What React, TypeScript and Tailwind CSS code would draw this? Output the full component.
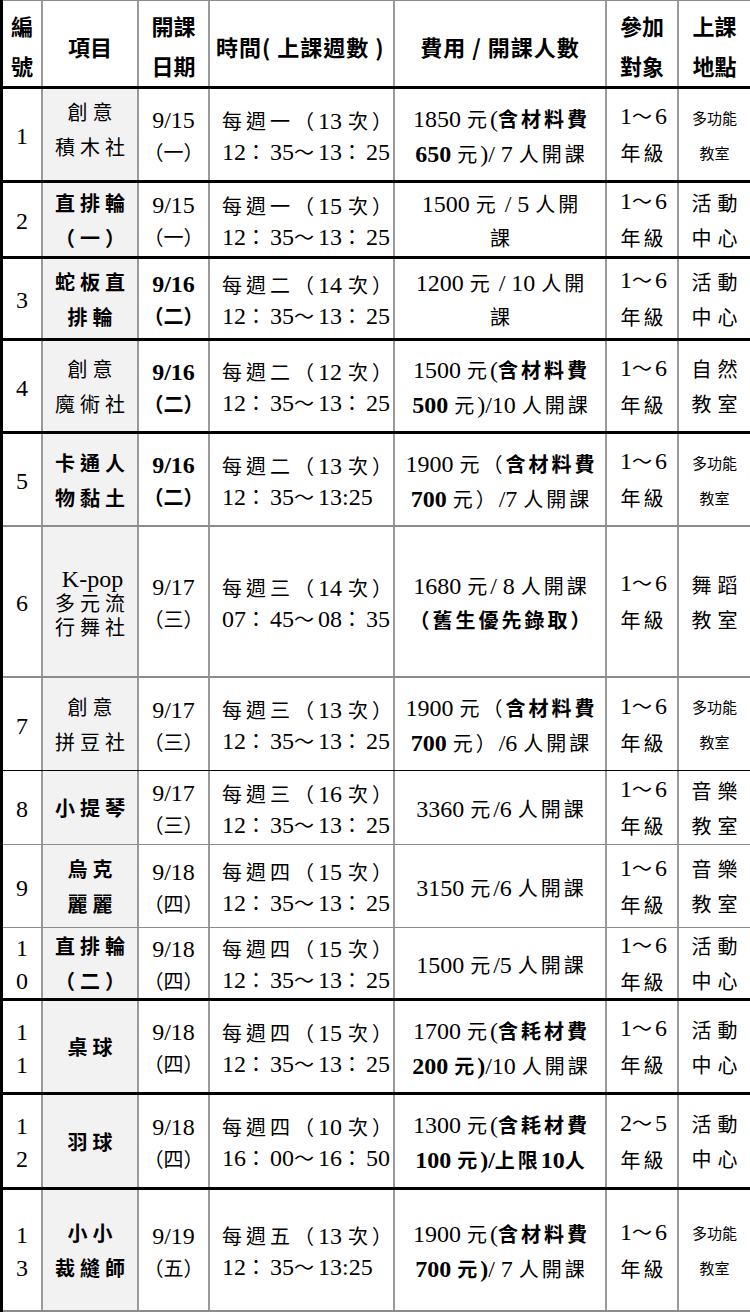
import type { ReactNode } from "react";

// 社團課程一覽表：編號 / 項目 / 日期 / 時間 / 費用 / 對象 / 地點

type Row = {
  no: string[];
  item: string[];
  date: string[];
  time: string[];
  fee: string[];
  grade: string[];
  place: string[];
  itemBold?: boolean;
  dateBold?: boolean;
  smallPlace?: boolean;
  rowCls: string; // 列高 + 下框線
  itemCls?: string;
};

const GRID = "grid grid-rows-1 grid-cols-[40px_96px_71px_185px_212px_72px_1fr]";
const CELL = "flex flex-col justify-center border-r-2 border-r-[#9a9a9a] whitespace-nowrap";
const LATIN = "font-['Liberation_Serif',serif] text-[24px] tracking-normal";

const BLACK3 = "border-b-[3px] border-b-black";
const GRAY2 = "border-b-2 border-b-[#8c8c8c]";
const BLACK1 = "border-b border-b-black";
const GRAY1 = "border-b border-b-[#8c8c8c]";

const ROWS: Row[] = [
  {
    no: ["1"], item: ["創意", "積木社"], itemCls: "pb-[12px]", date: ["9/15", "（一）"],
    time: ["每週一（13 次）", "12：35～13：25"],
    fee: ["1850 元(**含材料費**", "**650** 元)/ 7 人開課"],
    grade: ["1～6", "年級"], place: ["多功能", "教室"], smallPlace: true,
    rowCls: `h-[94px] ${BLACK3}`,
  },
  {
    no: ["2"], item: ["直排輪", "（一）"], itemBold: true, date: ["9/15", "（一）"],
    time: ["每週一（15 次）", "12：35～13：25"],
    fee: ["1500 元 / 5 人開", "課"],
    grade: ["1～6", "年級"], place: ["活動", "中心"],
    rowCls: `h-[76px] ${BLACK3}`,
  },
  {
    no: ["3"], item: ["蛇板直", "排輪"], itemBold: true, date: ["9/16", "（二）"], dateBold: true,
    time: ["每週二（14 次）", "12：35～13：25"],
    fee: ["1200 元 / 10 人開", "課"],
    grade: ["1～6", "年級"], place: ["活動", "中心"],
    rowCls: `h-[82px] ${BLACK3}`,
  },
  {
    no: ["4"], item: ["創意", "魔術社"], date: ["9/16", "（二）"], dateBold: true,
    time: ["每週二（12 次）", "12：35～13：25"],
    fee: ["1500 元(**含材料費**", "**500** 元)/10 人開課"],
    grade: ["1～6", "年級"], place: ["自然", "教室"],
    rowCls: `h-[93px] ${BLACK3}`,
  },
  {
    no: ["5"], item: ["卡通人", "物黏土"], itemBold: true, date: ["9/16", "（二）"], dateBold: true,
    time: ["每週二（13 次）", "12：35～13:25"],
    fee: ["1900 元（**含材料費**", "**700** 元）/7 人開課"],
    grade: ["1～6", "年級"], place: ["多功能", "教室"], smallPlace: true,
    rowCls: `h-[93px] ${GRAY2}`,
  },
  {
    no: ["6"], item: ["K-pop", "多元流", "行舞社"], itemCls: "!leading-[24px]", date: ["9/17", "（三）"],
    time: ["每週三（14 次）", "07：45～08：35"],
    fee: ["1680 元/ 8 人開課", "**（舊生優先錄取）**"],
    grade: ["1～6", "年級"], place: ["舞蹈", "教室"],
    rowCls: `h-[151px] ${GRAY2}`,
  },
  {
    no: ["7"], item: ["創意", "拼豆社"], date: ["9/17", "（三）"],
    time: ["每週三（13 次）", "12：35～13：25"],
    fee: ["1900 元（**含材料費**", "**700** 元）/6 人開課"],
    grade: ["1～6", "年級"], place: ["多功能", "教室"], smallPlace: true,
    rowCls: `h-[93px] ${BLACK1}`,
  },
  {
    no: ["8"], item: ["小提琴"], itemBold: true, date: ["9/17", "（三）"],
    time: ["每週三（16 次）", "12：35～13：25"],
    fee: ["3360 元/6 人開課"],
    grade: ["1～6", "年級"], place: ["音樂", "教室"],
    rowCls: `h-[74px] ${GRAY1}`,
  },
  {
    no: ["9"], item: ["烏克", "麗麗"], itemBold: true, date: ["9/18", "（四）"],
    time: ["每週四（15 次）", "12：35～13：25"],
    fee: ["3150 元/6 人開課"],
    grade: ["1～6", "年級"], place: ["音樂", "教室"],
    rowCls: `h-[83px] ${GRAY1}`,
  },
  {
    no: ["1", "0"], item: ["直排輪", "（二）"], itemBold: true, date: ["9/18", "（四）"],
    time: ["每週四（15 次）", "12：35～13：25"],
    fee: ["1500 元/5 人開課"],
    grade: ["1～6", "年級"], place: ["活動", "中心"],
    rowCls: `h-[73px] ${BLACK3}`,
  },
  {
    no: ["1", "1"], item: ["桌球"], itemBold: true, date: ["9/18", "（四）"],
    time: ["每週四（15 次）", "12：35～13：25"],
    fee: ["1700 元(**含耗材費**", "**200 元)**/10 人開課"],
    grade: ["1～6", "年級"], place: ["活動", "中心"],
    rowCls: `h-[94px] ${BLACK3}`,
  },
  {
    no: ["1", "2"], item: ["羽球"], itemBold: true, date: ["9/18", "（四）"],
    time: ["每週四（10 次）", "16：00～16：50"],
    fee: ["1300 元(**含耗材費**", "**100 元)/上限10人**"],
    grade: ["2～5", "年級"], place: ["活動", "中心"],
    rowCls: `h-[95px] ${BLACK3}`,
  },
  {
    no: ["1", "3"], item: ["小小", "裁縫師"], itemBold: true, date: ["9/19", "（五）"],
    time: ["每週五（13 次）", "12：35～13:25"],
    fee: ["1900 元(**含材料費**", "**700 元)**/ 7 人開課"],
    grade: ["1～6", "年級"], place: ["多功能", "教室"], smallPlace: true,
    rowCls: `h-[122px] ${GRAY2}`,
  },
];

// 英數字用襯線字 24px，中文用 20px；**...** 為粗體
function Rich({ text }: { text: string }) {
  const parts = text.split("**");
  return (
    <>
      {parts.map((part, i) => {
        const pieces = part.split(/([\x20-\x7e]+)/).filter(Boolean);
        const nodes: ReactNode[] = pieces.map((p, j) =>
          /^[\x20-\x7e]+$/.test(p) ? (
            <span key={j} className={LATIN}>
              {p}
            </span>
          ) : (
            <span key={j}>{p}</span>
          )
        );
        return (
          <span key={i} className={i % 2 ? "font-bold" : undefined}>
            {nodes}
          </span>
        );
      })}
    </>
  );
}

function Lines({ lines }: { lines: string[] }) {
  return (
    <>
      {lines.map((l, i) => (
        <div key={i}>
          <Rich text={l} />
        </div>
      ))}
    </>
  );
}

function Header() {
  return (
    <div
      className={`${GRID} h-[89px] border-t border-t-[#8c8c8c] ${BLACK3} font-['Noto_Sans_CJK_TC',sans-serif] text-[22px] font-bold leading-[40px]`}
    >
      <div className={`${CELL} items-center pt-[2px]`}>
        <div>編</div>
        <div>號</div>
      </div>
      <div className={`${CELL} items-center pt-[4px]`}>項目</div>
      <div className={`${CELL} items-center pt-[2px]`}>
        <div>開課</div>
        <div>日期</div>
      </div>
      <div className={`${CELL} pl-[6px] pt-[4px] tracking-[1px]`}>時間( 上課週數 )</div>
      <div className={`${CELL} items-center pt-[4px] tracking-[1px]`}>費用 / 開課人數</div>
      <div className={`${CELL} items-center pt-[2px]`}>
        <div>參加</div>
        <div>對象</div>
      </div>
      <div className="flex flex-col items-center justify-center pt-[2px]">
        <div>上課</div>
        <div>地點</div>
      </div>
    </div>
  );
}

function CourseRow({ r }: { r: Row }) {
  return (
    <div className={`${GRID} ${r.rowCls} text-[20px]`}>
      <div className={`${CELL} items-center pt-[4px] leading-[32px]`}>
        <Lines lines={r.no} />
      </div>
      <div
        className={`${CELL} items-center bg-[#f2f2f2] pl-[5px] pt-[4px] leading-[35px] tracking-[5px] ${
          r.itemBold ? "font-bold" : ""
        } ${r.itemCls ?? ""}`}
      >
        <Lines lines={r.item} />
      </div>
      <div className={`${CELL} items-center pt-[4px] leading-[32px] ${r.dateBold ? "font-bold" : ""}`}>
        <Lines lines={r.date} />
      </div>
      <div className={`${CELL} pl-[12px] pt-[4px] leading-[30px] tracking-[4px]`}>
        <Lines lines={r.time} />
      </div>
      <div className={`${CELL} items-center pl-[3px] pt-[4px] leading-[34px] tracking-[3px]`}>
        <Lines lines={r.fee} />
      </div>
      <div className={`${CELL} items-center pl-[3px] pt-[2px] leading-[37px] tracking-[3px]`}>
        <Lines lines={r.grade} />
      </div>
      {r.smallPlace ? (
        <div className="flex flex-col items-center justify-center whitespace-nowrap pt-[4px] text-[15px] leading-[35px]">
          <Lines lines={r.place} />
        </div>
      ) : (
        <div className="flex flex-col items-center justify-center whitespace-nowrap pl-[6px] pt-[4px] leading-[35px] tracking-[6px]">
          <Lines lines={r.place} />
        </div>
      )}
    </div>
  );
}

export default function App() {
  return (
    <div className="min-h-[1316px] w-[750px] bg-white text-black font-['Liberation_Serif','Noto_Sans_CJK_TC',serif]">
      <div className="border-l-[3px] border-l-black">
        <Header />
        {ROWS.map((r, i) => (
          <CourseRow key={i} r={r} />
        ))}
      </div>
    </div>
  );
}
